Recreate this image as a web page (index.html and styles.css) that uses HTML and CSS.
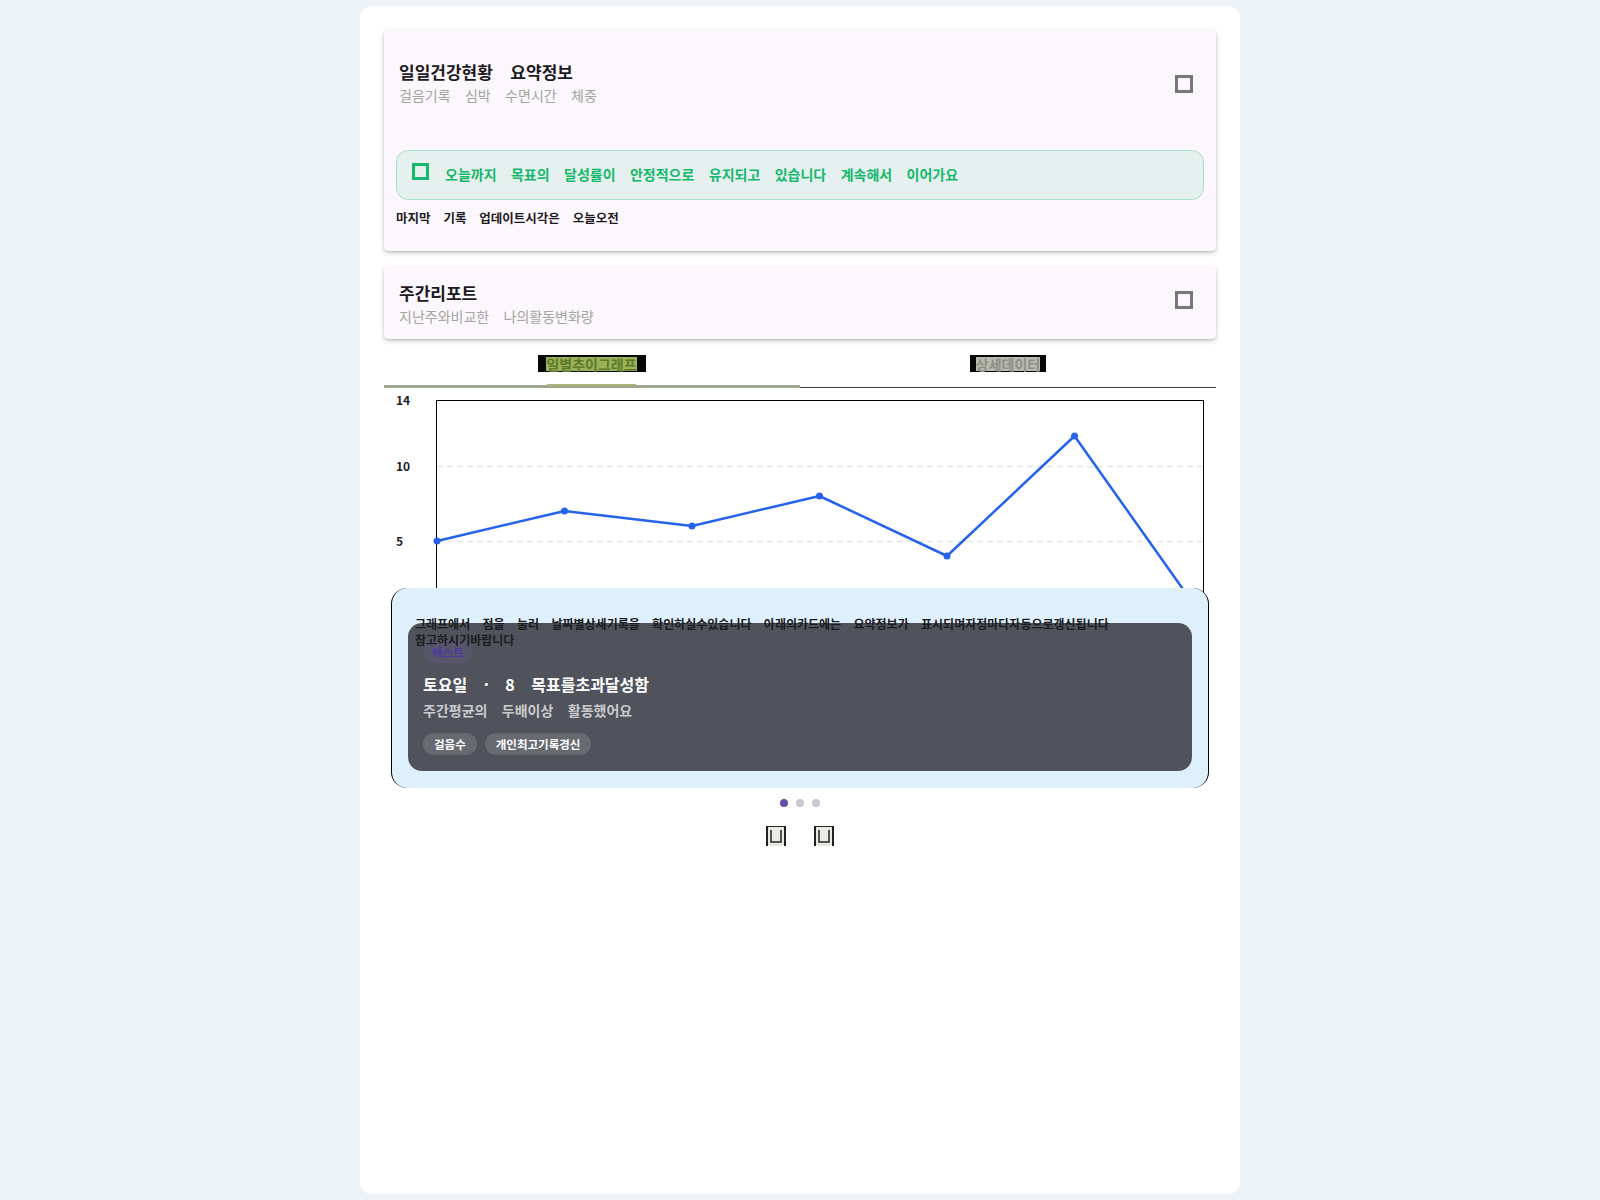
FILE: index.html
```html
<!DOCTYPE html>
<html lang="ko">
<head>
    <meta charset="UTF-8">
    <meta name="viewport" content="width=device-width, initial-scale=1.0">
    <title>일일건강현황</title>
    <link rel="stylesheet" href="styles.css">
</head>
<body>
    <div class="page">
        <!-- 요약 카드 -->
        <section class="card">
            <div class="card-head tall">
                <div>
                    <h2 class="card-title">일일건강현황 요약정보</h2>
                    <p class="card-sub">걸음기록 심박 수면시간 체중</p>
                </div>
                <button class="icon-btn" aria-label="접기">
                    <svg width="18" height="18" viewBox="0 0 18 18"><rect x="1.5" y="1.5" width="15" height="15" fill="none" stroke="#79767d" stroke-width="3"/></svg>
                </button>
            </div>
            <div class="card-body">
                <div class="notice">
                    <svg width="17" height="17" viewBox="0 0 17 17"><rect x="1.5" y="1.5" width="14" height="14" fill="none" stroke="#15b86c" stroke-width="3"/></svg>
                    <span class="notice-text">오늘까지 목표의 달성률이 안정적으로 유지되고 있습니다 계속해서 이어가요</span>
                </div>
                <p class="updated">마지막 기록 업데이트시각은 오늘오전</p>
            </div>
        </section>

        <!-- 리포트 카드 -->
        <section class="card">
            <div class="card-head">
                <div>
                    <h2 class="card-title">주간리포트</h2>
                    <p class="card-sub">지난주와비교한 나의활동변화량</p>
                </div>
                <button class="icon-btn" aria-label="펼치기">
                    <svg width="18" height="18" viewBox="0 0 18 18"><rect x="1.5" y="1.5" width="15" height="15" fill="none" stroke="#79767d" stroke-width="3"/></svg>
                </button>
            </div>
        </section>

        <div class="tabs">
            <button class="tab active"><span class="tab-label">일별추이그래프</span></button>
            <button class="tab"><span class="tab-label">상세데이터</span></button>
        </div>

        <div class="chart">
            <svg width="832" height="240" viewBox="0 0 832 240">
                <g class="axis-labels">
                    <text x="12" y="17">14</text>
                    <text x="12" y="83">10</text>
                    <text x="12" y="158">5</text>
                </g>
                <line x1="53" y1="78.5" x2="819" y2="78.5" stroke="#dfe5ec" stroke-width="1.5" stroke-dasharray="6 4"/>
                <line x1="53" y1="153.5" x2="819" y2="153.5" stroke="#dfe5ec" stroke-width="1.5" stroke-dasharray="6 4"/>
                <rect x="52.5" y="12.5" width="767" height="216" fill="none" stroke="#000"/>
                <polyline points="53,153 180.5,123 308,138 435.5,108 563,168 690.5,48 818,228" fill="none" stroke="#2563eb" stroke-width="2.5" stroke-linejoin="round"/>
                <g fill="#2563eb">
                    <circle cx="53" cy="153" r="3.5"/>
                    <circle cx="180.5" cy="123" r="3.5"/>
                    <circle cx="308" cy="138" r="3.5"/>
                    <circle cx="435.5" cy="108" r="3.5"/>
                    <circle cx="563" cy="168" r="3.5"/>
                    <circle cx="690.5" cy="48" r="3.5"/>
                    <circle cx="818" cy="228" r="3.5"/>
                </g>
            </svg>
        </div>

        <!-- 선택한 날짜 상세 -->
        <div class="detail">
            <p class="detail-text">그래프에서 점을 눌러 날짜별상세기록을 확인하실수있습니다 아래의카드에는 요약정보가 표시되며자정마다자동으로갱신됩니다 참고하시기바랍니다</p>
            <div class="best">
                <span class="best-tag">베스트</span>
                <h3 class="best-title">토요일 · 8 목표를초과달성함</h3>
                <p class="best-sub">주간평균의 두배이상 활동했어요</p>
                <div class="chips">
                    <span class="chip">걸음수</span>
                    <span class="chip">개인최고기록경신</span>
                </div>
            </div>
        </div>

        <div class="dots">
            <span class="dot on"></span>
            <span class="dot"></span>
            <span class="dot"></span>
        </div>

        <div class="pager">
            <button aria-label="이전">
                <svg width="12" height="13" viewBox="0 0 12 13"><path d="M1 0 V12 H11 V0" fill="none" stroke="#222" stroke-width="1.5"/></svg>
            </button>
            <button aria-label="다음">
                <svg width="12" height="13" viewBox="0 0 12 13"><path d="M1 0 V12 H11 V0" fill="none" stroke="#222" stroke-width="1.5"/></svg>
            </button>
        </div>
    </div>
</body>
</html>
```

FILE: styles.css
```css
body {
    margin: 0;
    background-color: #eef3f8;
    font-family: "Noto Sans CJK KR", "Noto Sans", sans-serif;
    color: #1c1b1f;
}
.page {
    box-sizing: border-box;
    width: 880px;
    min-height: 1188px;
    margin: 6px auto;
    padding: 24px;
    background-color: #fff;
    border-radius: 12px;
}
.card {
    background-color: #fcf6fd;
    border-radius: 4px;
    box-shadow: 0 2px 5px rgba(0,0,0,0.2), 0 1px 2px rgba(0,0,0,0.12);
}
.card + .card {
    margin-top: 16px;
}
.card-head {
    display: flex;
    align-items: center;
    justify-content: space-between;
    padding: 14px 23px 13px 15px;
}
.card-head.tall {
    padding-top: 30px;
    padding-bottom: 0;
}
.card-title {
    margin: 0;
    font-size: 17px;
    line-height: 24px;
    font-weight: 700;
    word-spacing: .75em;
}
.card-sub {
    margin: 1px 0 0;
    font-size: 14px;
    line-height: 20px;
    color: #a3a59f;
    word-spacing: .75em;
}
.icon-btn {
    display: block;
    width: 18px;
    height: 18px;
    margin-top: -7px;
    padding: 0;
    border: none;
    background: none;
}
.card-head.tall .icon-btn {
    margin-top: 3px;
}
.icon-btn svg {
    display: block;
}
.card-body {
    padding: 45px 12px 24px;
}
.notice {
    display: flex;
    align-items: flex-start;
    gap: 16px;
    padding: 13px 15px 15px;
    border: 1px solid #a9dfc6;
    border-radius: 12px;
    background-color: #e6f0ee;
}
.notice svg {
    flex: none;
    margin-top: -1px;
}
.notice-text {
    color: #14b86c;
    font-size: 14px;
    line-height: 20px;
    font-weight: 700;
    word-spacing: .75em;
}
.updated {
    margin: 9px 0 0;
    font-size: 12.5px;
    line-height: 18px;
    font-weight: 700;
    word-spacing: .75em;
}
.tabs {
    display: grid;
    grid-template-columns: 1fr 1fr;
    border-bottom: 1px solid #3f403a;
}
.tab {
    position: relative;
    display: flex;
    align-items: center;
    justify-content: center;
    height: 48px;
    padding: 0;
    border: none;
    background: none;
    font-family: inherit;
}
.tab.active {
    height: 49px;
    margin-bottom: -1px;
    box-shadow: inset 0 -3px #9ca78b;
}
.tab-label {
    position: relative;
    display: inline-block;
    font-size: 14px;
    line-height: 14px;
    font-weight: 700;
    border-style: solid;
    border-color: #050803;
    background-color: #b8bab1;
    color: #8d9086;
    border-width: 2px 6px 1px 6px;
}
.tab.active .tab-label {
    background-color: #9ab35a;
    color: #5d7a2a;
    border-width: 2px 9px 1px 8px;
}
.tab.active .tab-label::after {
    content: "";
    position: absolute;
    left: 1px;
    right: 1px;
    bottom: -15px;
    height: 2px;
    background-color: #a9b27a;
}
.chart {
    height: 200px;
}
.chart svg {
    display: block;
    overflow: visible;
}
.axis-labels text {
    font-family: "Noto Sans CJK KR", "Noto Sans", sans-serif;
    font-size: 12px;
    font-weight: 700;
    fill: #1c1b1f;
}
.detail {
    position: relative;
    margin: 0 7px;
    padding: 28px 16px 17px;
    background-color: #dff0fd;
    border: solid #000;
    border-width: 0 1px;
    border-radius: 16px;
}
.detail-text {
    max-width: 725px;
    margin: 0 0 -25px 7px;
    font-size: 12px;
    line-height: 16px;
    font-weight: 700;
    word-spacing: .75em;
    word-break: keep-all;
}
.best {
    padding: 17px 16px 16px 15px;
    background-color: #50535b;
    border-radius: 14px;
}
.best-tag {
    display: flex;
    align-items: center;
    width: fit-content;
    height: 23px;
    padding: 0 9px;
    border-radius: 12px;
    background-color: #57556a;
    color: #4f3b9c;
    font-size: 11.5px;
    font-weight: 700;
}
.best-title {
    margin: 10px 0 0;
    color: #fff;
    font-size: 16px;
    line-height: 22px;
    font-weight: 700;
    word-spacing: .75em;
}
.best-sub {
    margin: 5px 0 0;
    color: #c9cacc;
    font-size: 14px;
    line-height: 20px;
    font-weight: 700;
    word-spacing: .75em;
}
.chips {
    display: flex;
    gap: 8px;
    margin-top: 13px;
}
.chip {
    display: inline-flex;
    align-items: center;
    height: 22px;
    padding: 0 11px;
    border-radius: 11px;
    background-color: #686a71;
    color: #fff;
    font-size: 11.5px;
    font-weight: 700;
}
.dots {
    display: flex;
    justify-content: center;
    gap: 8px;
    margin-top: 11px;
}
.dot {
    width: 8px;
    height: 8px;
    border-radius: 50%;
    background-color: #cbc4d2;
}
.dot.on {
    background-color: #6750a4;
}
.pager {
    display: flex;
    justify-content: center;
    gap: 28px;
    margin-top: 19px;
}
.pager button {
    display: flex;
    align-items: flex-end;
    justify-content: center;
    width: 20px;
    height: 20px;
    padding: 0 0 3px;
    border: solid #222;
    border-width: 1px 2px 0;
    background-color: #e9eae5;
}
.pager svg {
    display: block;
}
```
